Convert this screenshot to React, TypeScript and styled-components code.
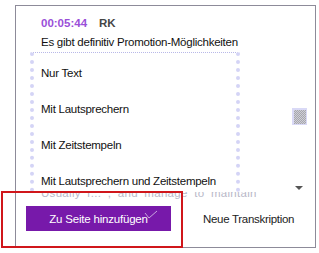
import React from "react";
import styled, { createGlobalStyle } from "styled-components";

const Global = createGlobalStyle`
  html, body { margin: 0; padding: 0; background: #ffffff; }
  body { font-family: "Liberation Sans", Arial, sans-serif; width: 319px; height: 253px; overflow: hidden; }
`;

const Stage = styled.div`
  position: relative;
  width: 319px;
  height: 253px;
  padding: 5px 4px 0 15px;
  box-sizing: border-box;
`;

const Panel = styled.div`
  position: relative;
  width: 301px;
  height: 243px;
  box-sizing: border-box;
  border: 1px solid #8d8b99;
  display: flex;
  flex-direction: column;
  overflow: hidden;
`;

const Header = styled.div`
  padding: 10px 0 0 25px;
  display: flex;
  flex-direction: column;
  gap: 5px;
`;

const MetaRow = styled.div`
  display: flex;
  align-items: baseline;
  gap: 12px;
  font-size: 11.5px;
  line-height: 14px;
`;

const Time = styled.span`
  color: #9a4fd8;
  font-weight: bold;
`;

const Speaker = styled.span`
  color: #454545;
  font-weight: bold;
`;

const Line = styled.div`
  font-size: 11.5px;
  line-height: 14px;
  letter-spacing: -0.25px;
  color: #111111;
  white-space: nowrap;
`;

const Body = styled.div`
  flex: none;
  height: 157px;
  box-sizing: border-box;
  position: relative;
  display: flex;
  justify-content: flex-end;
  padding: 59px 8px 0 0;
`;

const ScrollTrack = styled.div`
  display: flex;
  flex-direction: column;
  align-items: center;
  gap: 61px;
  width: 16px;
`;

const Thumb = styled.div`
  width: 15px;
  height: 17px;
  background: #d9d9f6;
  padding: 2px 1px 1px 2px;
  box-sizing: border-box;
  &::after {
    content: "";
    display: block;
    width: 100%;
    height: 100%;
    background: repeating-conic-gradient(#a6a6ae 0% 25%, #cfcfd6 0% 50%) 0 0 / 2px 2px;
  }
`;

const Arrow = styled.div`
  width: 0;
  height: 0;
  border-left: 4px solid transparent;
  border-right: 4px solid transparent;
  border-top: 4px solid #555555;
`;

const Faded = styled.div`
  position: absolute;
  left: 25px;
  top: 137px;
  height: 14px;
  overflow: hidden;
  font-size: 11.5px;
  line-height: 14px;
  color: #b8b8c8;
  white-space: nowrap;
  word-spacing: 3px;
  letter-spacing: 0.3px;
  clip-path: inset(6px 0 0 0);
`;

const Footer = styled.div`
  display: flex;
  align-items: center;
  gap: 32px;
  padding: 0 0 0 10px;
`;

const AddButton = styled.button`
  position: relative;
  flex: none;
  width: 145px;
  height: 25px;
  border: none;
  background: #7719aa;
  color: #ffffff;
  font-family: "Liberation Sans", Arial, sans-serif;
  font-size: 11.5px;
  letter-spacing: -0.2px;
  padding: 0;
  display: flex;
  align-items: center;
  justify-content: center;
  cursor: pointer;
`;

const Check = styled.svg`
  position: absolute;
  left: 118px;
  top: 4px;
`;

const LinkButton = styled.button`
  border: none;
  background: none;
  padding: 0;
  font-family: "Liberation Sans", Arial, sans-serif;
  font-size: 11.5px;
  letter-spacing: -0.3px;
  color: #222222;
  cursor: pointer;
`;

const Menu = styled.ul`
  position: absolute;
  left: 14px;
  top: 46px;
  width: 210px;
  height: 140px;
  margin: 0;
  padding: 13px 0 0 0;
  list-style: none;
  background: #ffffff;
  box-sizing: border-box;
  border-top: 1px dotted #b8b8e8;
  border-left: 4px dotted #d4d4f6;
  border-right: 4px dotted #d4d4f6;
  display: flex;
  flex-direction: column;
  gap: 22px;
`;

const MenuItem = styled.li`
  padding-left: 7px;
  font-size: 11.5px;
  line-height: 14px;
  letter-spacing: -0.25px;
  color: #111111;
  white-space: nowrap;
`;

const Highlight = styled.div`
  position: absolute;
  left: 1px;
  top: 191px;
  width: 182px;
  height: 57px;
  box-sizing: border-box;
  border: 2px solid #d0161b;
  pointer-events: none;
`;

export default function App() {
  const items = [
    "Nur Text",
    "Mit Lautsprechern",
    "Mit Zeitstempeln",
    "Mit Lautsprechern und Zeitstempeln",
  ];
  return (
    <>
      <Global />
      <Stage>
        <Panel>
          <Header>
            <MetaRow>
              <Time>00:05:44</Time>
              <Speaker>RK</Speaker>
            </MetaRow>
            <Line>Es gibt definitiv Promotion-Möglichkeiten</Line>
          </Header>
          <Body>
            <Faded>Usually r... , and manage to maintain</Faded>
            <ScrollTrack>
              <Thumb />
              <Arrow />
            </ScrollTrack>
          </Body>
          <Footer>
            <AddButton>
              Zu Seite hinzufügen
              <Check width="14" height="10" viewBox="0 0 14 10">
                <path d="M1 3 L5 8 L13 1" fill="none" stroke="#c9a6e0" strokeWidth="1" />
              </Check>
            </AddButton>
            <LinkButton>Neue Transkription</LinkButton>
          </Footer>
          <Menu>
            {items.map((t) => (
              <MenuItem key={t}>{t}</MenuItem>
            ))}
          </Menu>
        </Panel>
        <Highlight />
      </Stage>
    </>
  );
}
